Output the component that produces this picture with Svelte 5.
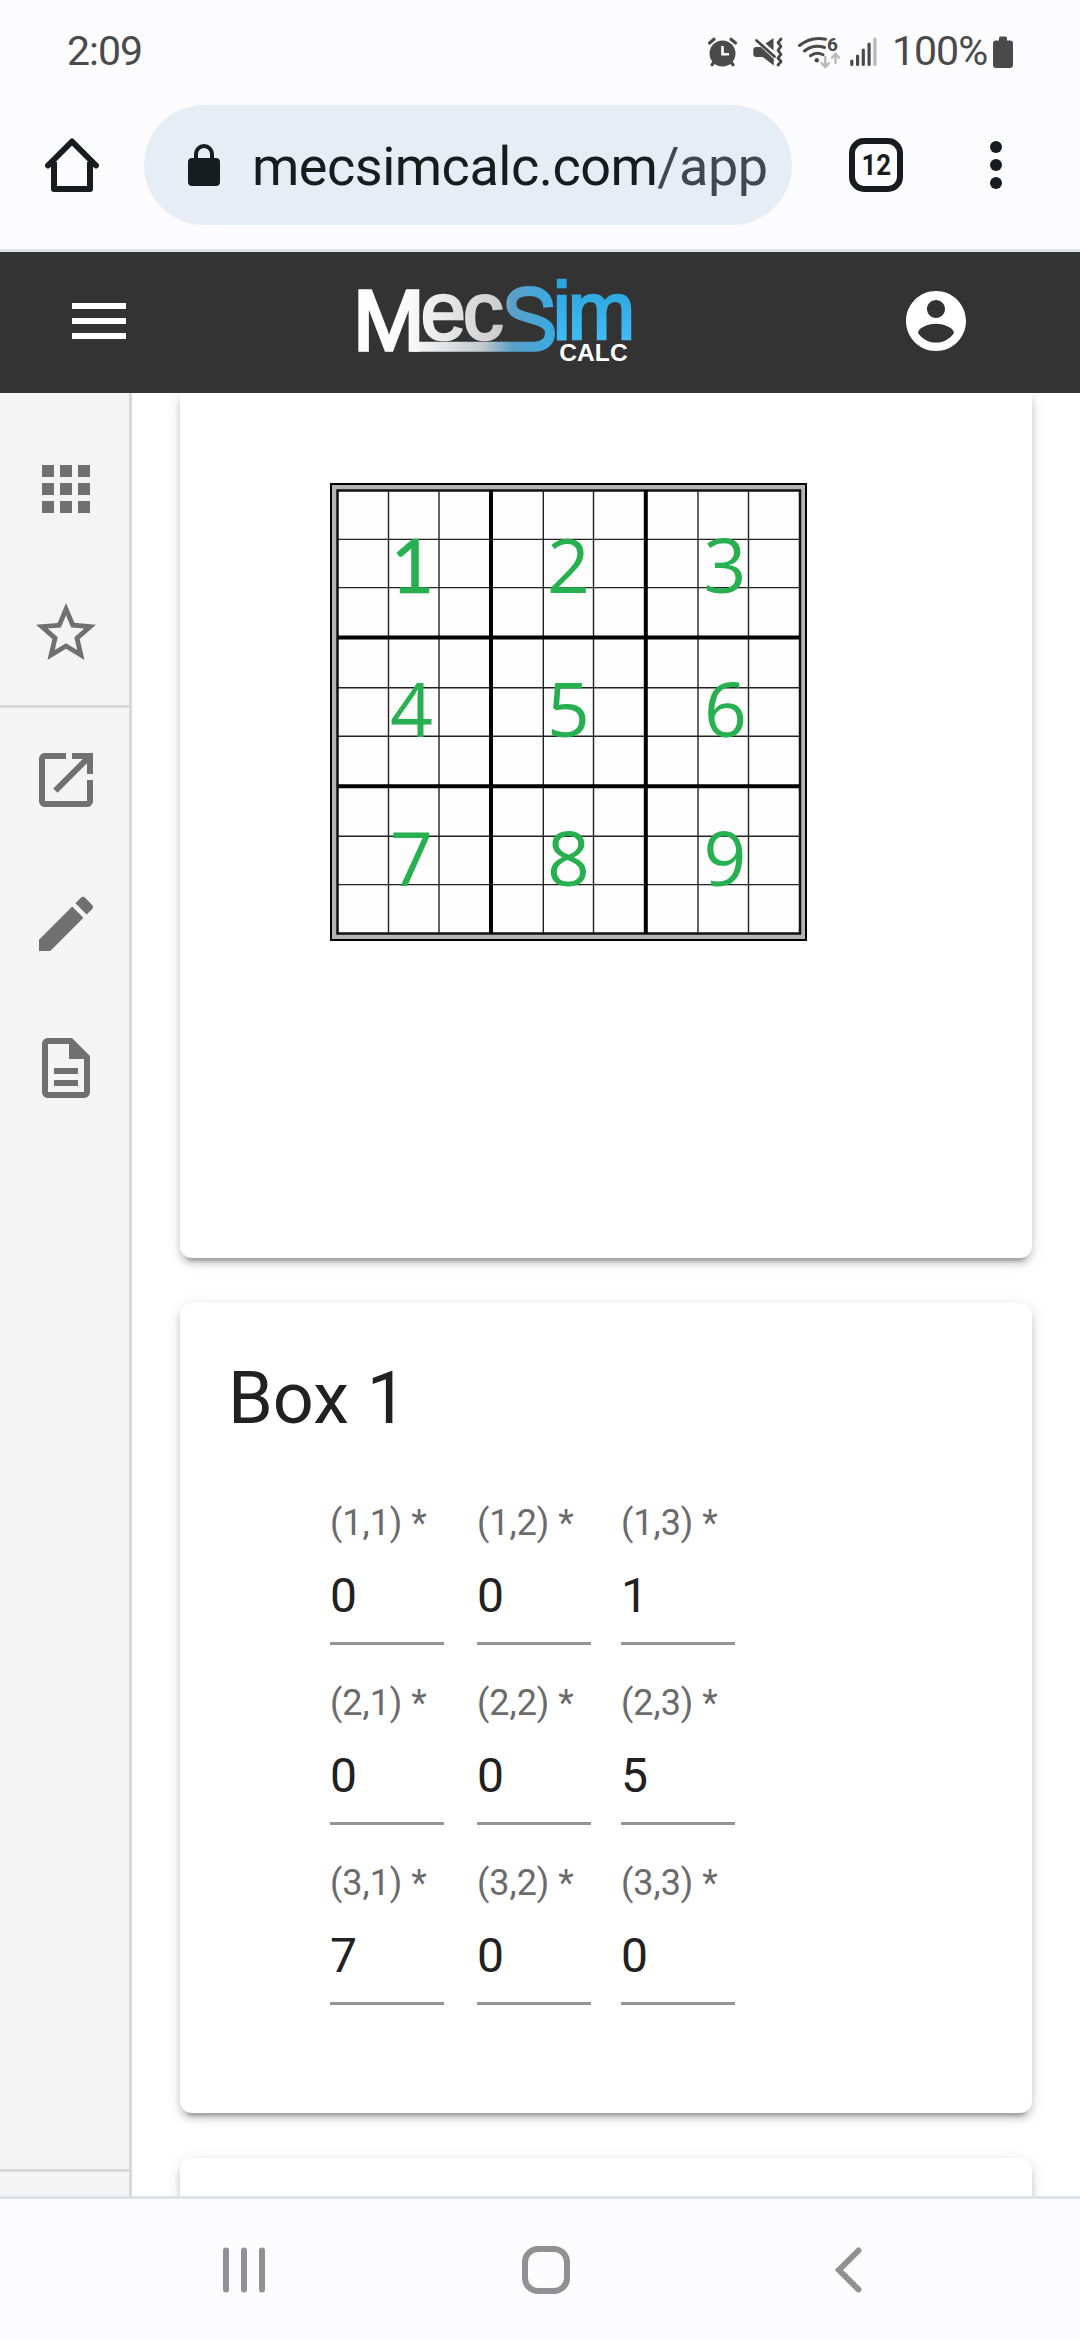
<script>
  const apps = [4, 10, 16];
  const boxes = [
    { n: 1, x: 412.5, y: 592.5 }, { n: 2, x: 568.5, y: 592.5 }, { n: 3, x: 725, y: 592.5 },
    { n: 4, x: 411.5, y: 736.5 }, { n: 5, x: 568.5, y: 736.5 }, { n: 6, x: 725.5, y: 736.5 },
    { n: 7, x: 411.5, y: 885.5 }, { n: 8, x: 568.5, y: 885.5 }, { n: 9, x: 725, y: 885.5 }
  ];
  const thinX = [388.5, 439, 543.3, 593.5, 698, 748.5];
  const thinY = [539.4, 587.6, 687.8, 736.2, 836.2, 884.6];
  const rows = [
    [0, 0, 1],
    [0, 0, 5],
    [7, 0, 0]
  ];
</script>

<div class="screen">
  <header class="browser">
    <div class="status">
      <span class="clock">2:09</span>
      <svg class="sys" width="190" height="45" viewBox="700 30 190 45" fill="#4a4a4a">
        <circle cx="722.5" cy="53.500" r="13" />
        <g stroke="#4a4a4a" stroke-width="3.200" stroke-linecap="round" fill="none">
          <path d="M709.500 43l4.500-3.800M735.500 43l-4.500-3.800" />
          <path d="M715 61l-3 3.800M730 61l3 3.800" />
        </g>
        <path d="M722.500 46v8.300h6.500" stroke="#fcfcff" stroke-width="2.600" fill="none" />

        <path d="M753.300 50q0-3 3-3h4.500l13 12v6.500l-11-8.500h-6.500q-3 0-3-3zM765.500 43.500l8-5.500v12.500z" />
        <path d="M756.500 40.500l18 16" stroke="#4a4a4a" stroke-width="2.800" stroke-linecap="round" />
        <path d="M781 39l-3 3.700 3 3.600-3 4 3 4-3 3.700 3 3.500-3 3.500" fill="none" stroke="#4a4a4a" stroke-width="2.800" stroke-linecap="round" stroke-linejoin="round" />

        <g fill="none" stroke="#4a4a4a" stroke-width="3" stroke-linecap="round">
          <path d="M799.500 45.500q12-9.500 26-6.300" />
          <path d="M804.500 51q9-7 20-3.500" />
          <path d="M810.500 55.800q6-4.500 12.500-1" />
        </g>
        <circle cx="816.800" cy="60.300" r="2.200" />
        <text x="827" y="50.500" font-size="19" font-weight="700">6</text>
        <path d="M825.300 56v11M821 62.500l4.300 4.500 4.300-4.500M835.500 64v-10M831.200 58.500l4.300-4.500 4.300 4.500" fill="none" stroke="#b8b8ba" stroke-width="2.400" />

        <g stroke="#4a4a4a" stroke-width="3.200" stroke-linecap="round">
          <path d="M851.800 61v3.500M857.600 56v8.500M863.300 50v14.500M869.100 44v20.500" />
          <path d="M874.900 39v25.500" stroke="#b8b8ba" />
        </g>
      </svg>
      <span class="percent">100%</span>
      <svg class="battery" width="20" height="32" viewBox="0 0 20 32" fill="#4a4a4a">
        <path d="M6 2q0-1.500 1.500-1.500h5Q14 .5 14 2v2.500h3q3 0 3 3V29q0 3-3 3H3q-3 0-3-3V7.500q0-3 3-3h3z" />
      </svg>
    </div>
    <div class="toolbar">
      <svg class="home" width="54" height="54" viewBox="0 0 54 54" fill="none" stroke="#171c1f" stroke-width="6" stroke-linejoin="round">
        <path d="M3 27.500 27 3.500l24 24" stroke-linecap="round" />
        <path d="M9 24v27h36V24" />
      </svg>
      <div class="omnibox">
        <svg width="32" height="42" viewBox="0 0 32 42">
          <rect y="14" width="32" height="28" rx="4" fill="#171c1f" />
          <path d="M8 15v-5a8 8 0 0 1 16 0v5" fill="none" stroke="#171c1f" stroke-width="4" />
        </svg>
        <span class="url">mecsimcalc.com<span>/app</span></span>
      </div>
      <div class="tabs"><span>12</span></div>
      <svg class="more" width="12" height="48" viewBox="0 0 12 48" fill="#171c1f">
        <circle cx="6" cy="6" r="6" /><circle cx="6" cy="24" r="6" /><circle cx="6" cy="42" r="6" />
      </svg>
    </div>
  </header>

  <nav class="appbar">
    <svg width="72" height="72" viewBox="0 0 24 24" fill="#fff"><path d="M3 18h18v-2H3v2zm0-5h18v-2H3v2zm0-7v2h18V6H3z" /></svg>
    <svg class="logo" width="320" height="133" viewBox="0 0 960 399" role="img" aria-label="MecSim Calc">
      <defs>
        <linearGradient id="silver" gradientUnits="userSpaceOnUse" x1="50" y1="0" x2="500" y2="0">
          <stop offset="0" stop-color="#fff" /><stop offset=".35" stop-color="#fafafa" /><stop offset="1" stop-color="#c9c9c9" />
        </linearGradient>
        <linearGradient id="ribbon" gradientUnits="userSpaceOnUse" x1="240" y1="0" x2="650" y2="0">
          <stop offset="0" stop-color="#f4f4f4" /><stop offset=".45" stop-color="#c5cacd" /><stop offset=".68" stop-color="#5a9fc6" /><stop offset="1" stop-color="#35ade6" />
        </linearGradient>
        <linearGradient id="sky" gradientUnits="userSpaceOnUse" x1="0" y1="60" x2="0" y2="240">
          <stop offset="0" stop-color="#2ba4dc" /><stop offset="1" stop-color="#42bbf5" />
        </linearGradient>
      </defs>
      <path d="M625 142C623 110 604 93 568 93C533 93 514 108 514 132C514 160 535 165 575 176C615 187 630 197 630 220C630 245 612 260 582 260H215" fill="none" stroke="url(#ribbon)" stroke-width="30" />
      <g class="mark">
        <text fill="url(#silver)" stroke="url(#silver)" stroke-width="8"><tspan x="39" y="269" font-size="258" stroke-width="10">M</tspan><tspan x="242 369" y="237" font-size="243">ec</tspan></text>
        <text x="638 683" y="237" font-size="243" fill="url(#sky)" stroke="url(#sky)" stroke-width="8">im</text>
        <text class="calc" x="658" y="303" font-size="71" textLength="205" lengthAdjust="spacingAndGlyphs" fill="#fff">CALC</text>
      </g>
    </svg>
    <svg width="72" height="72" viewBox="0 0 24 24" fill="#fff"><path d="M12 2C6.480 2 2 6.480 2 12s4.480 10 10 10 10-4.480 10-10S17.520 2 12 2zm0 3c1.660 0 3 1.340 3 3s-1.340 3-3 3-3-1.340-3-3 1.340-3 3-3zm0 14.200c-2.500 0-4.710-1.280-6-3.220.03-1.990 4-3.080 6-3.080 1.990 0 5.970 1.090 6 3.080-1.290 1.940-3.500 3.220-6 3.220z" /></svg>
  </nav>

  <div class="body">
    <aside>
      <div class="item">
        <svg viewBox="0 0 24 24">
          {#each apps as y}{#each apps as x}<rect {x} {y} width="4" height="4" />{/each}{/each}
        </svg>
      </div>
      <div class="item">
        <svg viewBox="0 0 24 24"><path d="M22 9.240l-7.190-.62L12 2 9.190 8.630 2 9.240l5.460 4.730L5.820 21 12 17.270 18.180 21l-1.630-7.030L22 9.240zM12 15.400l-3.760 2.270 1-4.280-3.320-2.880 4.380-.38L12 6.100l1.710 4.040 4.380.38-3.320 2.880 1 4.280L12 15.400z" /></svg>
      </div>
      <hr />
      <div class="item">
        <svg viewBox="0 0 24 24"><path d="M19 19H5V5h7V3H5c-1.110 0-2 .9-2 2v14c0 1.100.89 2 2 2h14c1.100 0 2-.9 2-2v-7h-2v7zM14 3v2h3.590l-9.830 9.830 1.410 1.410L19 6.410V10h2V3h-7z" /></svg>
      </div>
      <div class="item">
        <svg viewBox="0 0 24 24"><path d="M3 17.250V21h3.750L17.810 9.940l-3.750-3.750L3 17.250zM20.710 7.040c.39-.39.39-1.020 0-1.410l-2.340-2.340a.996.996 0 0 0-1.410 0l-1.830 1.830 3.750 3.750 1.830-1.830z" /></svg>
      </div>
      <div class="item">
        <svg viewBox="0 0 24 24"><path d="M8 16h8v2H8zm0-4h8v2H8zm6-10H6c-1.100 0-2 .9-2 2v16c0 1.100.89 2 1.990 2H18c1.100 0 2-.9 2-2V8l-6-6zm4 18H6V4h7v5h5v11z" /></svg>
      </div>
      <hr class="last" />
    </aside>

    <main>
      <section class="card board">
        <svg width="477" height="458" viewBox="330 483 477 458">
          <rect x="331" y="484" width="475" height="456" fill="#b5b5b5" stroke="#000" stroke-width="2" />
          <rect x="337.500" y="490.500" width="462.500" height="443" fill="#fdfdfd" stroke="#111" stroke-width="2.500" />
          <g stroke="#222" stroke-width="1.400">
            {#each thinX as x}<line x1={x} x2={x} y1="490" y2="933" />{/each}
            {#each thinY as y}<line x1="338" x2="800" y1={y} y2={y} />{/each}
          </g>
          <path d="M491 490v443M645.800 490v443M338 637.500h462M338 786.300h462" stroke="#000" stroke-width="4" />
          <g class="digits">
            {#each boxes as b}<text class:serifed={b.n === 1} x={b.x} y={b.y}>{b.n}</text>{/each}
          </g>
        </svg>
      </section>

      <section class="card form">
        <h2>Box 1</h2>
        <div class="fields">
          {#each rows as row, r}
            {#each row as value, c}
              <div class="field">
                <span class="label">({r + 1},{c + 1}) *</span>
                <span class="value">{value}</span>
              </div>
            {/each}
          {/each}
        </div>
      </section>

      <section class="card next"></section>
    </main>
  </div>

  <footer>
    <svg width="1080" height="141" viewBox="0 2199 1080 141" fill="none" stroke="#919193" stroke-width="6">
      <g stroke-linecap="round">
        <path d="M226 2250.500v39M244 2250.500v39M262 2250.500v39" />
        <path d="M858.500 2250.500l-19.500 19.500 19.500 19.500" />
      </g>
      <rect x="525" y="2249" width="42" height="42" rx="13" />
    </svg>
  </footer>
</div>

<style>
  :global(body) { margin: 0; background: #fff; }
  .screen {
    width: 1080px; height: 2340px; overflow: hidden;
    display: flex; flex-direction: column;
    font-family: Roboto, "Liberation Sans", sans-serif; color: #212121;
  }
  svg { display: block; flex: none; }

  .browser { height: 249px; background: #fcfcff; border-bottom: 3px solid #dde3ea; flex: none; }
  .status { height: 105px; display: flex; align-items: flex-start; color: #4a4a4a; font-size: 41px; line-height: 48px; }
  .clock { margin: 27px 0 0 67px; width: 633px; letter-spacing: -1px; }
  .sys { margin-top: 30px; }
  .percent { margin: 27px 0 0 2px; width: 101px; letter-spacing: -1px; white-space: nowrap; }
  .battery { margin-top: 36px; }
  .toolbar { display: flex; align-items: center; height: 120px; padding-left: 45px; }
  .omnibox {
    margin-left: 45px; padding-left: 44px; box-sizing: border-box;
    width: 648px; height: 120px; border-radius: 60px; background: #e6edf4;
    display: flex; align-items: center; gap: 32px;
  }
  .url { font-size: 54px; line-height: 64px; padding-top: 3px; letter-spacing: -0.5px; color: #171c1f; white-space: nowrap; }
  .url span { color: #40484f; }
  .tabs {
    margin-left: 57px; width: 54px; height: 54px; box-sizing: border-box;
    border: 6px solid #171c1f; border-radius: 15px; color: #171c1f;
    display: flex; align-items: center; justify-content: center;
    font-size: 30px; font-weight: 700; line-height: 30px;
  }
  .tabs span { transform: scaleX(.86); }
  .more { margin-left: 87px; }

  .appbar {
    height: 141px; flex: none; background: #333; box-sizing: border-box;
    padding: 0 108px 0 63px; display: flex; align-items: center;
  }
  .logo { margin: 8px 240px 0 205px; align-self: flex-start; }
  .appbar > svg:not(.logo) { margin-bottom: 3px; }
  .mark { font-family: "Liberation Sans", Arial, sans-serif; }
  .calc { font-weight: 700; }

  .body { flex: 1; min-height: 0; display: flex; overflow: hidden; background: #fff; }
  aside {
    width: 132px; box-sizing: border-box; padding-top: 24px; flex: none;
    background: #f4f4f4; border-right: 3px solid #d8d8d8;
    display: flex; flex-direction: column;
  }
  .item { height: 144px; padding-left: 30px; display: flex; align-items: center; flex: none; }
  .item svg { width: 72px; height: 72px; fill: #707070; }
  hr { margin: 0; border: 0; height: 3px; width: 100%; background: #d8d8d8; flex: none; }
  hr.last { margin-top: auto; margin-bottom: 24px; }

  main { flex: 1; padding: 0 48px; display: flex; flex-direction: column; gap: 45px; }
  .card {
    box-sizing: border-box; background: #fff; border-radius: 12px; flex: none;
    box-shadow: 0 9px 3px -6px rgba(0,0,0,.2), 0 6px 6px 0 rgba(0,0,0,.14), 0 3px 15px 0 rgba(0,0,0,.12);
  }
  .board { height: 865px; padding: 90px 0 0 150px; border-radius: 0 0 12px 12px; }
  .digits { font-family: "Open Sans", "Noto Sans", sans-serif; font-size: 75px; fill: #26b050; text-anchor: middle; }
  .serifed { font-family: Lato, sans-serif; stroke: #26b050; stroke-width: .6; }
  .form { height: 810px; padding: 48px; }
  h2 { margin: 0; font-size: 72px; line-height: 96px; font-weight: 400; }
  .fields {
    margin: 54px 0 0 102px; display: grid;
    grid-template-columns: 147px 144px 114px; grid-auto-rows: 180px;
  }
  .field {
    width: 114px; height: 144px; box-sizing: border-box; border-bottom: 3px solid #949494;
    display: flex; flex-direction: column; white-space: nowrap;
  }
  .label { padding-top: 1px; font-size: 36px; line-height: 42px; color: #6b6b6b; }
  .value { margin-top: 23px; font-size: 48px; line-height: 57px; }
  .next { height: 300px; }

  footer { height: 141px; flex: none; background: #fcfcff; border-top: 3px solid #dde3e8; }
</style>
